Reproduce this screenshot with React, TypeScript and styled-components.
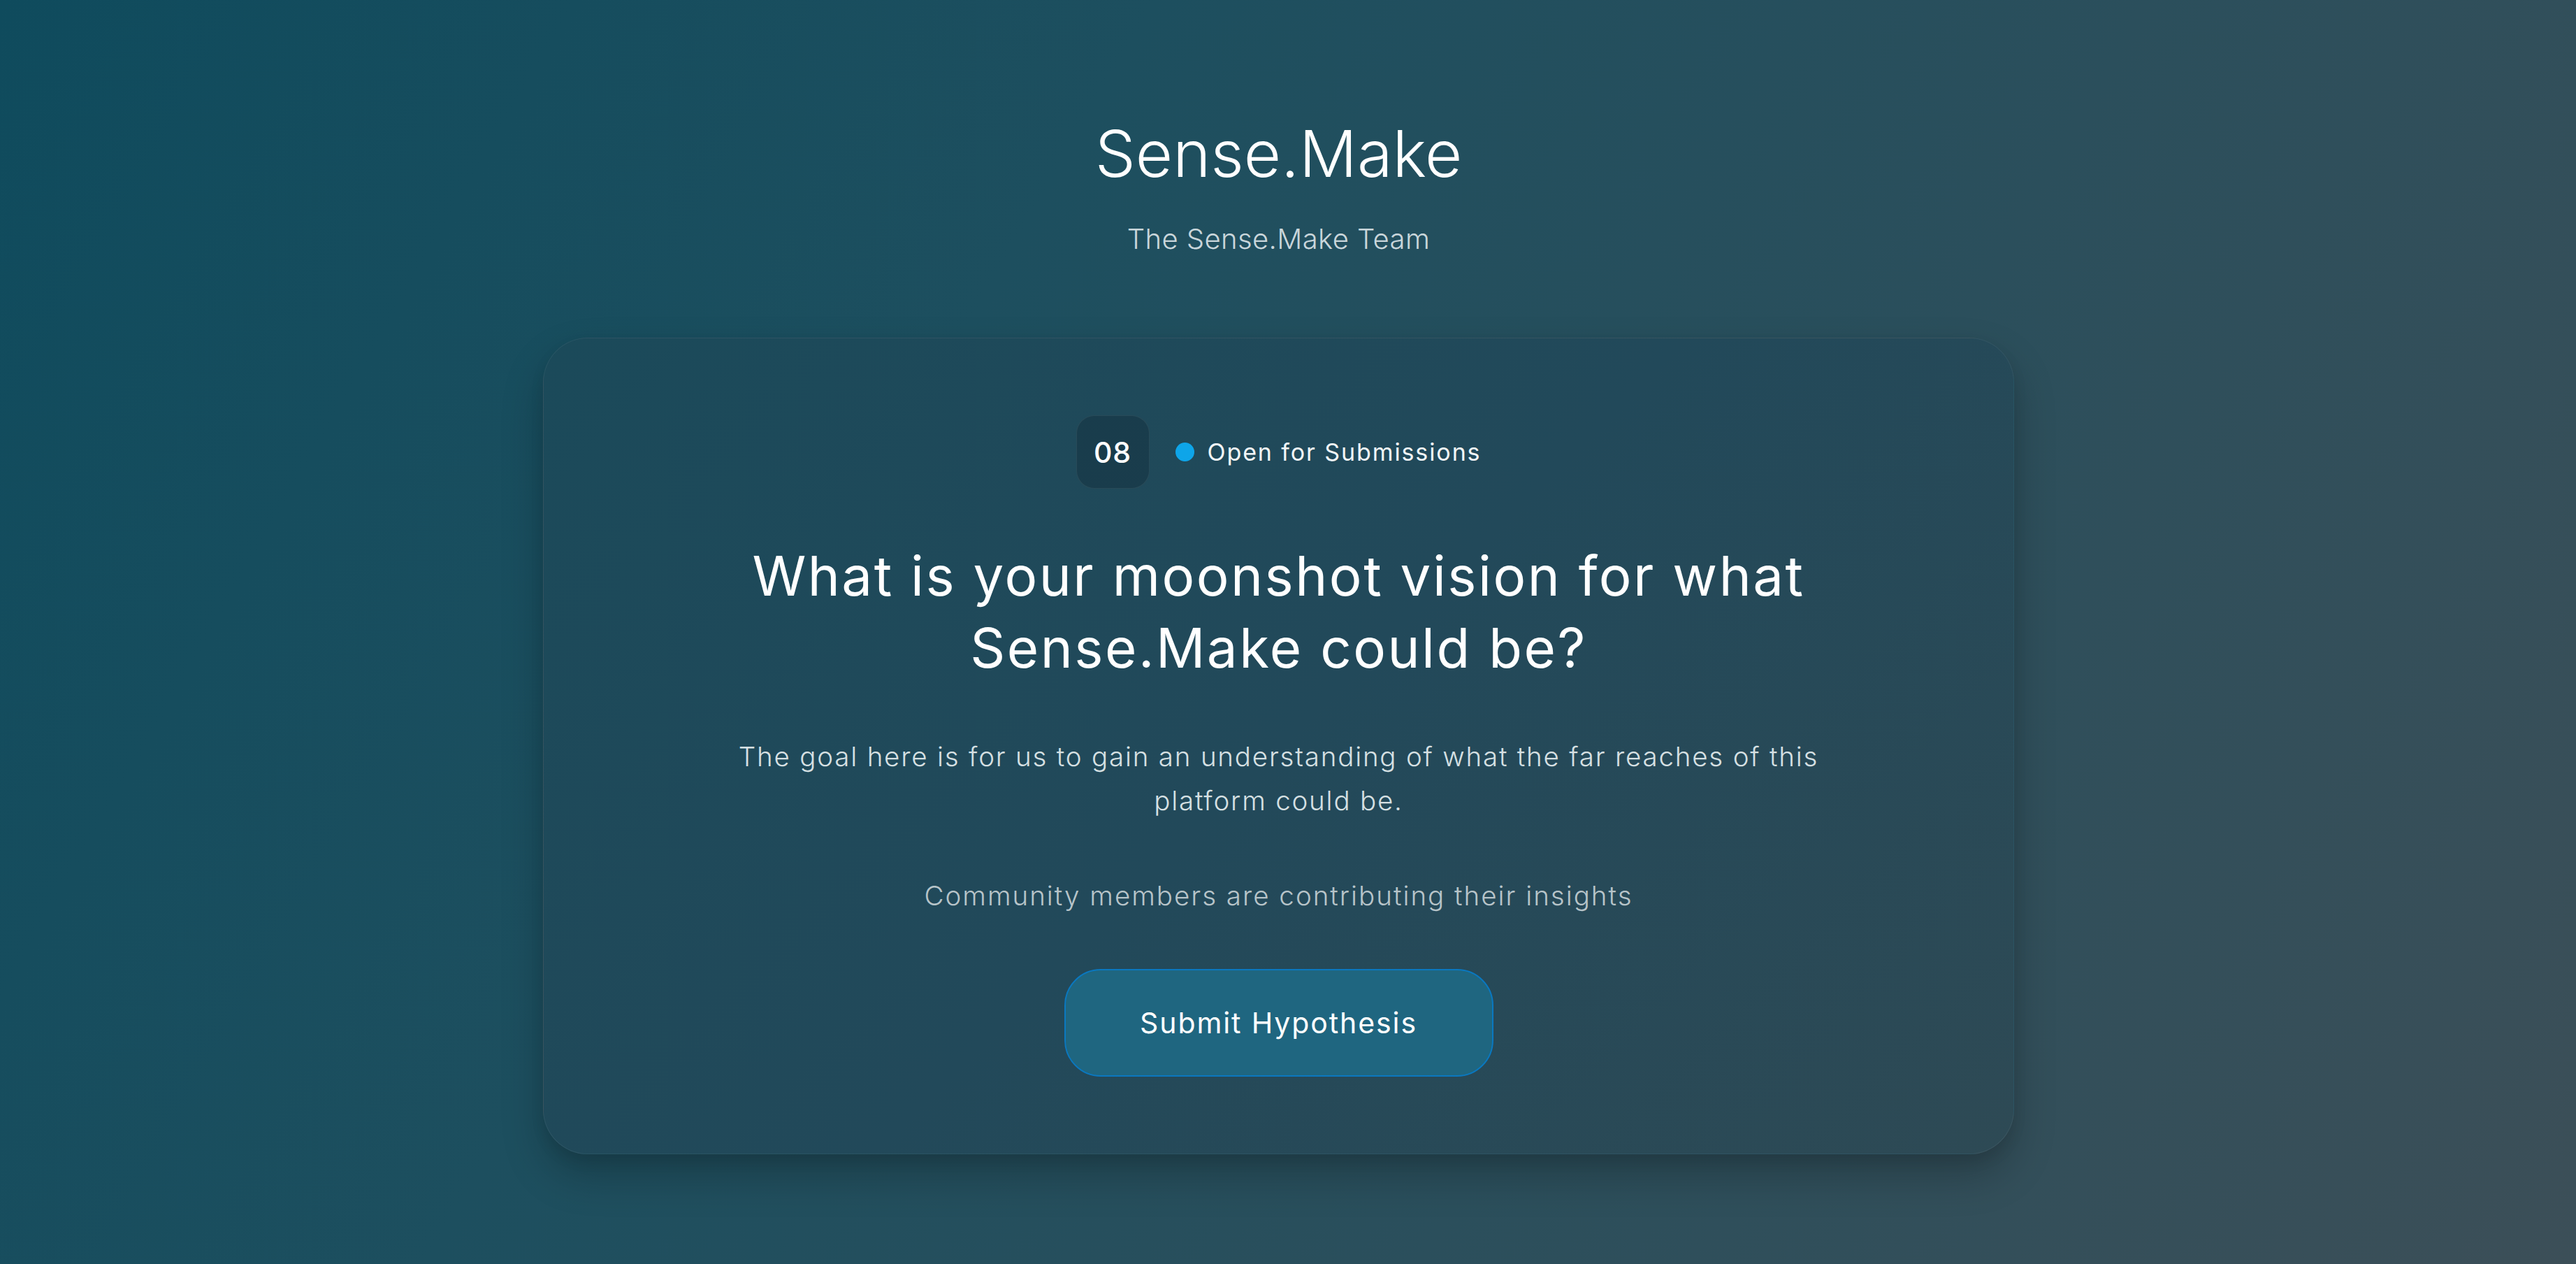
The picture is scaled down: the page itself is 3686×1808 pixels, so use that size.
import React from "react";
import styled, { createGlobalStyle } from "styled-components";

const GlobalStyle = createGlobalStyle`
  html, body {
    margin: 0;
    padding: 0;
  }
  body {
    font-family: Inter, "Noto Sans", sans-serif;
    background: #1f4f5e;
  }
  * { box-sizing: border-box; }
`;

const Page = styled.main`
  min-height: 1808px;
  width: 100%;
  padding: 165px 27px 0 0;
  display: flex;
  flex-direction: column;
  align-items: center;
  background: linear-gradient(120deg, #0f4b5d 0%, #1d4f5f 35%, #2b4f5c 65%, #3c4f58 100%);
`;

const Header = styled.header`
  display: flex;
  flex-direction: column;
  align-items: center;
  gap: 43px;
`;

const Title = styled.h1`
  margin: 0;
  font-size: 92px;
  line-height: 110px;
  font-weight: 300;
  color: #ffffff;
  letter-spacing: 0;
`;

const Subtitle = styled.p`
  margin: 0;
  font-size: 40px;
  line-height: 48px;
  font-weight: 300;
  color: #c9d6db;
  letter-spacing: 0.4px;
`;

const Card = styled.section`
  margin-top: 117px;
  width: 2105px;
  padding: 110px 80px 110px;
  border-radius: 64px;
  border: 1px solid rgba(255, 255, 255, 0.06);
  background: linear-gradient(135deg, #1b4a5a 0%, #22495a 50%, #2e4a55 100%);
  box-shadow: 0 30px 60px rgba(0, 0, 0, 0.22), 0 10px 20px rgba(0, 0, 0, 0.08);
  display: flex;
  flex-direction: column;
  align-items: center;
  text-align: center;
`;

const StatusRow = styled.div`
  display: flex;
  align-items: center;
  height: 105px;
`;

const NumberBadge = styled.div`
  width: 105px;
  height: 105px;
  border-radius: 26px;
  background: rgba(10, 30, 40, 0.28);
  border: 1px solid rgba(255, 255, 255, 0.07);
  display: flex;
  align-items: center;
  justify-content: center;
  font-size: 41px;
  font-weight: 500;
  color: #ffffff;
  letter-spacing: 1px;
  margin-right: 37px;
`;

const Dot = styled.span`
  width: 27px;
  height: 27px;
  border-radius: 50%;
  background: #0ea5e9;
  margin-right: 19px;
`;

const StatusText = styled.span`
  font-size: 34px;
  font-weight: 400;
  color: #f2f6f7;
  letter-spacing: 1.9px;
`;

const Question = styled.h2`
  margin: 73px 0 0;
  max-width: 1640px;
  font-size: 78px;
  line-height: 103px;
  font-weight: 400;
  color: #ffffff;
  letter-spacing: 2.5px;
`;

const Description = styled.p<{ $muted?: boolean }>`
  margin: 73px 0 0;
  max-width: 1580px;
  font-size: 38.5px;
  line-height: 63px;
  font-weight: 300;
  color: ${(p) => (p.$muted ? "#b7c4c9" : "#d6e0e3")};
  letter-spacing: ${(p) => (p.$muted ? "2px" : "1.8px")};
`;

const SubmitButton = styled.button`
  margin-top: 73px;
  width: 614px;
  height: 154px;
  border-radius: 52px;
  border: 2px solid #0a78c0;
  background: #1f6680;
  color: #ffffff;
  font-family: inherit;
  font-size: 41px;
  font-weight: 400;
  letter-spacing: 1.9px;
  cursor: pointer;
`;

export default function App() {
  return (
    <>
      <GlobalStyle />
      <Page>
        <Header>
          <Title>Sense.Make</Title>
          <Subtitle>The Sense.Make Team</Subtitle>
        </Header>
        <Card>
          <StatusRow>
            <NumberBadge>08</NumberBadge>
            <Dot />
            <StatusText>Open for Submissions</StatusText>
          </StatusRow>
          <Question>What is your moonshot vision for what Sense.Make could be?</Question>
          <Description>
            The goal here is for us to gain an understanding of what the far reaches of this platform could be.
          </Description>
          <Description $muted>Community members are contributing their insights</Description>
          <SubmitButton>Submit Hypothesis</SubmitButton>
        </Card>
      </Page>
    </>
  );
}
